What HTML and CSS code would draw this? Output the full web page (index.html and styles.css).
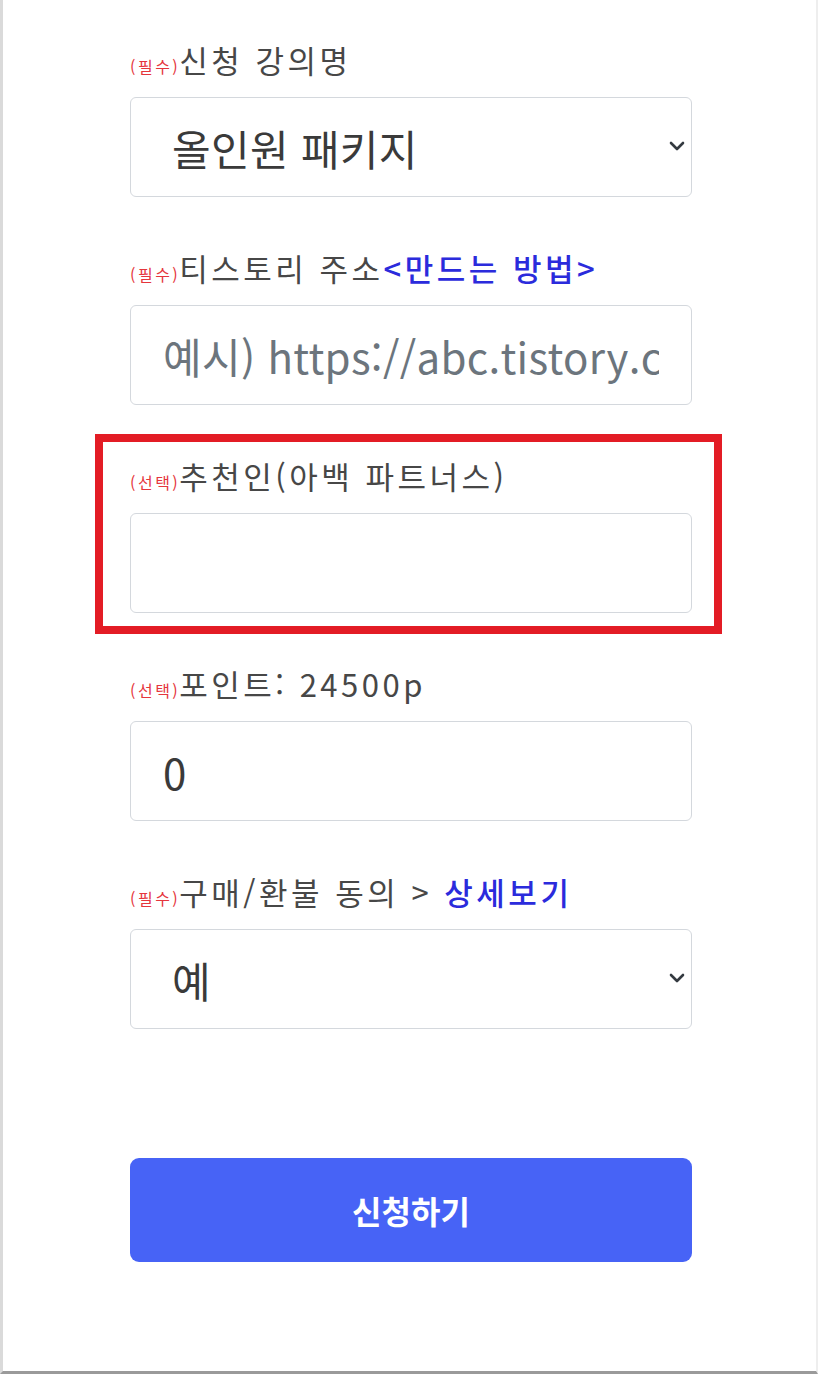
FILE: index.html
```html
<!DOCTYPE html>
<html lang="ko">
<head>
<meta charset="utf-8">
<title>신청</title>
<link rel="stylesheet" href="styles.css">
</head>
<body>
<div class="page">
  <form class="form">
    <div class="field">
      <label class="label"><span class="tag">(필수)</span>신청 강의명</label>
      <div class="select-wrap">
        <select class="control select"><option>올인원 패키지</option></select>
        <svg class="chev" width="16" height="12" viewBox="0 0 16 12"><path d="M2 3l6 6 6-6" fill="none" stroke="#343a40" stroke-width="2.6" stroke-linecap="round" stroke-linejoin="round"/></svg>
      </div>
    </div>
    <div class="field">
      <label class="label"><span class="tag">(필수)</span>티스토리 주소<a class="link">&lt;만드는 방법&gt;</a></label>
      <input class="control input" type="text" placeholder="예시) https://abc.tistory.com">
    </div>
    <div class="field highlighted">
      <label class="label"><span class="tag">(선택)</span>추천인(아백 파트너스)</label>
      <input class="control input" type="text">
    </div>
    <div class="field">
      <label class="label"><span class="tag">(선택)</span>포인트: 24500p</label>
      <input class="control input" type="text" value="0">
    </div>
    <div class="field">
      <label class="label"><span class="tag">(필수)</span>구매/환불 동의 &gt; <a class="link">상세보기</a></label>
      <div class="select-wrap">
        <select class="control select"><option>예</option></select>
        <svg class="chev" width="16" height="12" viewBox="0 0 16 12"><path d="M2 3l6 6 6-6" fill="none" stroke="#343a40" stroke-width="2.6" stroke-linecap="round" stroke-linejoin="round"/></svg>
      </div>
    </div>
    <button type="button" class="submit">신청하기</button>
  </form>
</div>
</body>
</html>
```
FILE: styles.css
```css
* { box-sizing: border-box; }
html, body { margin: 0; padding: 0; background: #fff; }
body { font-family: "Noto Sans CJK KR", "Noto Sans", sans-serif; color: #444; }
.page {
  width: 818px;
  height: 1374px;
  border-left: 3px solid #dadada;
  border-right: 2px solid #eeeeee;
  border-bottom: 3px solid #9a9a9a;
  padding: 40px 0 0 127px;
}
.form { width: 562px; display: flex; flex-direction: column; }
.field { display: flex; flex-direction: column; margin-bottom: 51px; position: relative; }
.label {
  display: block;
  height: 40px;
  line-height: 40px;
  font-size: 31px;
  letter-spacing: 3.5px;
  color: #474747;
  margin-bottom: 17px;
  margin-left: 0;
  white-space: nowrap;
}
.tag { font-size: 16px; letter-spacing: 2.5px; color: #e5353c; margin-right: -1px; }
.link { color: #2b2bdc; font-weight: 500; text-decoration: none; }
.control {
  width: 562px;
  height: 100px;
  border: 1.5px solid #d4d8dd;
  border-radius: 6px;
  background: #fff;
  font-family: "Noto Sans CJK KR", "Noto Sans", sans-serif;
  font-size: 42px;
  letter-spacing: 0.3px;
  color: #3a3a3a;
  outline: none;
  margin: 0;
}
.input { padding: 0 32px; }
.input::placeholder { color: #6c757d; }
.select-wrap { position: relative; }
.select { appearance: none; -webkit-appearance: none; padding: 0 60px 0 41px; display: block; }
.chev { position: absolute; right: 7px; top: 43px; pointer-events: none; }
.highlighted::after {
  content: "";
  position: absolute;
  top: -22px;
  bottom: -21px;
  left: -35px;
  right: -30px;
  border: 8px solid #e31c25;
  pointer-events: none;
}
.submit {
  margin-top: 78px;
  width: 562px;
  height: 104px;
  border: none;
  border-radius: 9px;
  background: #4763f6;
  color: #fff;
  font-family: "Noto Sans CJK KR", "Noto Sans", sans-serif;
  font-size: 32px;
  font-weight: 700;
}
```
